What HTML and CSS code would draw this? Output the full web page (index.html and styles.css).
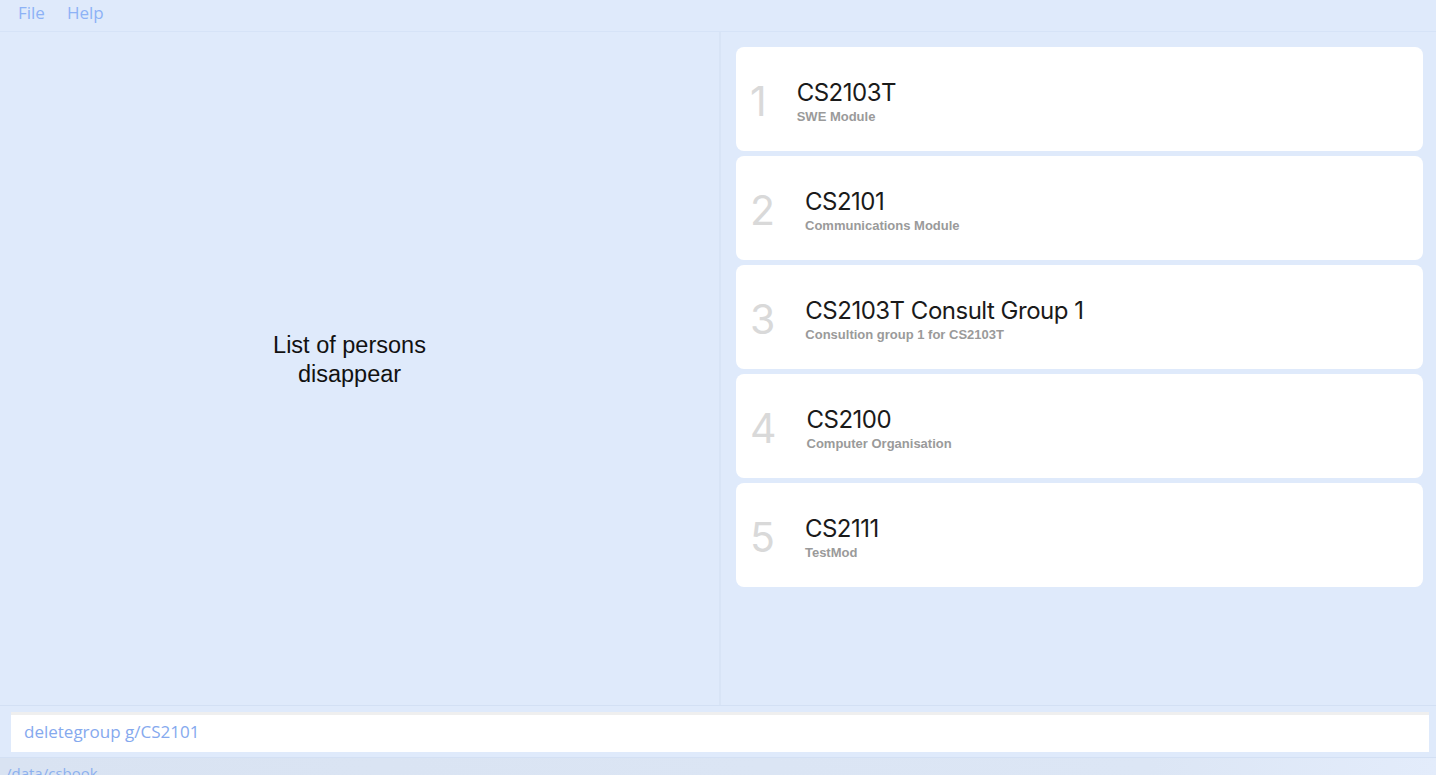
FILE: index.html
```html
<!DOCTYPE html>
<html>
<head>
<meta charset="utf-8">
<link rel="stylesheet" href="styles.css">
</head>
<body>
<div class="app">
  <nav class="menubar">
    <span class="menu-item">File</span>
    <span class="menu-item">Help</span>
  </nav>
  <main class="main">
    <section class="left-pane">
      <p class="empty-msg">List of persons<br>disappear</p>
    </section>
    <section class="right-pane">
      <div class="card">
        <span class="card-index">1</span>
        <div class="card-body">
          <div class="card-title">CS2103T</div>
          <div class="card-sub">SWE Module</div>
        </div>
      </div>
      <div class="card">
        <span class="card-index">2</span>
        <div class="card-body">
          <div class="card-title">CS2101</div>
          <div class="card-sub">Communications Module</div>
        </div>
      </div>
      <div class="card">
        <span class="card-index">3</span>
        <div class="card-body">
          <div class="card-title">CS2103T Consult Group 1</div>
          <div class="card-sub">Consultion group 1 for CS2103T</div>
        </div>
      </div>
      <div class="card">
        <span class="card-index">4</span>
        <div class="card-body">
          <div class="card-title">CS2100</div>
          <div class="card-sub">Computer Organisation</div>
        </div>
      </div>
      <div class="card">
        <span class="card-index">5</span>
        <div class="card-body">
          <div class="card-title">CS2111</div>
          <div class="card-sub">TestMod</div>
        </div>
      </div>
    </section>
  </main>
  <div class="command-area">
    <div class="command-box">deletegroup g/CS2101</div>
  </div>
  <footer class="status-bar">/data/csbook</footer>
</div>
</body>
</html>
```
FILE: styles.css
```css
html, body {
  margin: 0;
  padding: 0;
  height: 100%;
  overflow: hidden;
}
body {
  background: #dfeafb;
  font-family: "Open Sans", "Liberation Sans", sans-serif;
}
.app {
  display: flex;
  flex-direction: column;
  height: 775px;
  width: 1436px;
}
.menubar {
  height: 31px;
  border-bottom: 1px solid #d6e3f7;
  display: flex;
  align-items: center;
  gap: 22px;
  padding-left: 18px;
  padding-bottom: 5px;
  box-sizing: border-box;
  flex: 0 0 32px;
}
.menu-item {
  color: #8db2f6;
  font-size: 17px;
  font-weight: 400;
  line-height: 24px;
}
.main {
  flex: 0 0 673px;
  display: flex;
  border-bottom: 1px solid #d3e0f4;
}
.left-pane {
  width: 721px;
  flex: 0 0 721px;
  border-right: 2px solid #d8e4f6;
  display: flex;
  align-items: center;
  justify-content: center;
  padding-bottom: 18px;
  padding-right: 20px;
  box-sizing: border-box;
}
.empty-msg {
  margin: 0;
  text-align: center;
  font-family: "Liberation Sans", Arial, sans-serif;
  font-size: 23.5px;
  line-height: 29px;
  color: #111;
}
.right-pane {
  flex: 1;
  display: flex;
  flex-direction: column;
  gap: 5px;
  padding: 15px 13px 0 15px;
}
.card {
  height: 104px;
  background: #fff;
  border-radius: 8px;
  display: flex;
  align-items: center;
  padding-left: 14px;
  padding-bottom: 2px;
  box-sizing: border-box;
}
.card-index {
  font-family: "Inter", "Liberation Sans", sans-serif;
  font-size: 41px;
  color: #d9d9d9;
  font-weight: 400;
  margin-right: 30px;
  padding-top: 6px;
}
.card-body {
  display: flex;
  flex-direction: column;
  padding-top: 8px;
}
.card-title {
  font-family: "Inter", "Liberation Sans", sans-serif;
  font-size: 24px;
  color: #1a1a1a;
  line-height: 30px;
  letter-spacing: -0.5px;
}
.card-sub {
  font-family: "Liberation Sans", Arial, sans-serif;
  font-size: 13px;
  font-weight: 700;
  color: #9a9a9a;
  line-height: 18px;
}
.command-area {
  flex: 0 0 51px;
  padding: 6px 7px 5px 11px;
  box-sizing: border-box;
  border-bottom: 1px solid #d3e0f4;
}
.command-box {
  height: 40px;
  background: #fff;
  border-top: 3px solid #efefef;
  box-sizing: border-box;
  padding-left: 13px;
  font-size: 17px;
  line-height: 34px;
  color: #85a9ee;
}
.status-bar {
  flex: 1;
  background: linear-gradient(90deg, #d9e3f2 0%, #dce6f5 80%, #e3ecfb 100%);
  color: #8cb0ee;
  font-size: 15px;
  padding-left: 6px;
  line-height: 30px;
  overflow: hidden;
}
```
